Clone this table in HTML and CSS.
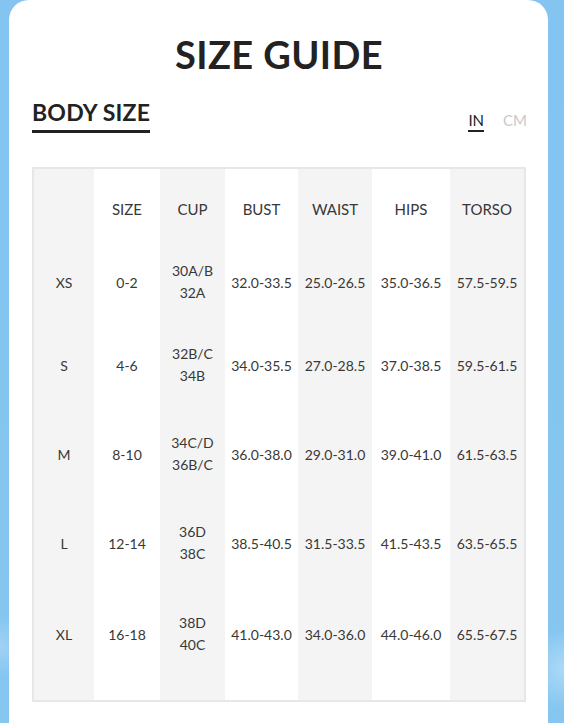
FILE: index.html
```html
<!DOCTYPE html>
<html lang="en">
<head>
<meta charset="utf-8">
<title>Size Guide</title>
<link rel="stylesheet" href="styles.css">
</head>
<body>
<div class="card">
  <h1 class="title">SIZE GUIDE</h1>
  <div class="subhead">
    <h2 class="section">BODY SIZE</h2>
    <div class="units">
      <span class="unit active">IN</span>
      <span class="unit">CM</span>
    </div>
  </div>
  <div class="table">
    <div class="col shade">
      <div class="cell"></div>
      <div class="cell">XS</div>
      <div class="cell">S</div>
      <div class="cell">M</div>
      <div class="cell">L</div>
      <div class="cell">XL</div>
    </div>
    <div class="col">
      <div class="cell head">SIZE</div>
      <div class="cell">0-2</div>
      <div class="cell">4-6</div>
      <div class="cell">8-10</div>
      <div class="cell">12-14</div>
      <div class="cell">16-18</div>
    </div>
    <div class="col shade">
      <div class="cell head">CUP</div>
      <div class="cell two">30A/B<br>32A</div>
      <div class="cell two">32B/C<br>34B</div>
      <div class="cell two">34C/D<br>36B/C</div>
      <div class="cell two">36D<br>38C</div>
      <div class="cell two">38D<br>40C</div>
    </div>
    <div class="col">
      <div class="cell head">BUST</div>
      <div class="cell">32.0-33.5</div>
      <div class="cell">34.0-35.5</div>
      <div class="cell">36.0-38.0</div>
      <div class="cell">38.5-40.5</div>
      <div class="cell">41.0-43.0</div>
    </div>
    <div class="col shade">
      <div class="cell head">WAIST</div>
      <div class="cell">25.0-26.5</div>
      <div class="cell">27.0-28.5</div>
      <div class="cell">29.0-31.0</div>
      <div class="cell">31.5-33.5</div>
      <div class="cell">34.0-36.0</div>
    </div>
    <div class="col">
      <div class="cell head">HIPS</div>
      <div class="cell">35.0-36.5</div>
      <div class="cell">37.0-38.5</div>
      <div class="cell">39.0-41.0</div>
      <div class="cell">41.5-43.5</div>
      <div class="cell">44.0-46.0</div>
    </div>
    <div class="col shade">
      <div class="cell head">TORSO</div>
      <div class="cell">57.5-59.5</div>
      <div class="cell">59.5-61.5</div>
      <div class="cell">61.5-63.5</div>
      <div class="cell">63.5-65.5</div>
      <div class="cell">65.5-67.5</div>
    </div>
  </div>
</div>
</body>
</html>
```
FILE: styles.css
```css
html, body {
  margin: 0;
  padding: 0;
}
body {
  background:
    radial-gradient(circle at 100% 88%, #acd9f6 0, rgba(172,217,246,0) 40px),
    radial-gradient(circle at 0% 85%, #a0d2f4 0, rgba(160,210,244,0) 30px),
    linear-gradient(180deg, #83c4f0 0%, #86c6f1 100%);
  min-height: 723px;
  font-family: "Lato", "Liberation Sans", sans-serif;
  color: #333;
  overflow: hidden;
}
.card {
  margin-left: 9px;
  width: 539px;
  min-height: 760px;
  background: #fff;
  border-radius: 20px 20px 0 0;
  box-sizing: border-box;
  padding: 28px 22px 0 23px;
}
.title {
  margin: 0;
  text-align: center;
  font-size: 38px;
  line-height: 52px;
  font-weight: 700;
  color: #222;
  letter-spacing: 0.4px;
}
.subhead {
  display: flex;
  justify-content: space-between;
  align-items: flex-start;
  margin-top: 18px;
}
.section {
  margin: 0;
  font-size: 23px;
  line-height: 28px;
  font-weight: 700;
  color: #222;
  letter-spacing: 0.2px;
  padding-bottom: 4px;
  border-bottom: 3px solid #222;
}
.units {
  display: flex;
  gap: 19px;
  padding-top: 13px;
  margin-right: -1px;
}
.unit {
  font-size: 15px;
  line-height: 18px;
  color: #c9c9c9;
  padding-bottom: 1px;
  border-bottom: 2px solid transparent;
}
.unit.active {
  color: #222;
  border-bottom-color: #222;
}
.table {
  margin-top: 34px;
  border: 2px solid #e7e7e7;
  display: grid;
  grid-template-columns: 60px 66px 65px 73px 74px 78px 74px;
}
.col {
  display: grid;
  grid-template-rows: 74px 78px 88px 90px 88px 94px;
  padding-bottom: 19px;
}
.col.shade {
  background: #f4f4f4;
}
.cell {
  display: flex;
  align-items: center;
  justify-content: center;
  text-align: center;
  font-size: 14px;
  color: #383838;
  white-space: nowrap;
}
.cell.head {
  font-size: 15px;
  padding-top: 6px;
}
.cell.two {
  line-height: 22px;
}
```
